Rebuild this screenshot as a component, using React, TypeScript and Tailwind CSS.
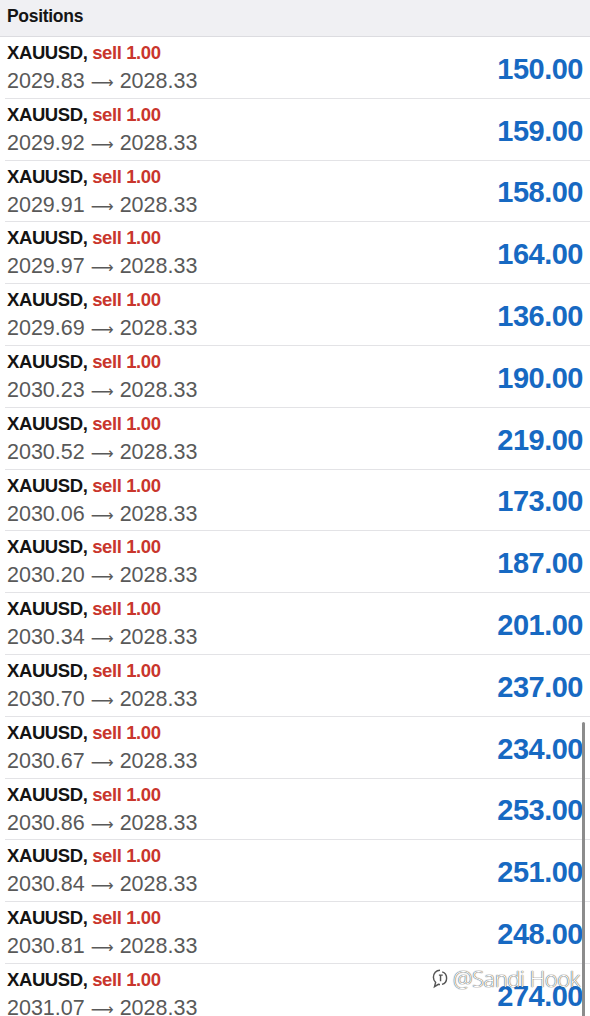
import React from 'react';

// open -> close pairs and profit for each sell position
const positions: { open: string; profit: string }[] = [
  { open: '2029.83', profit: '150.00' },
  { open: '2029.92', profit: '159.00' },
  { open: '2029.91', profit: '158.00' },
  { open: '2029.97', profit: '164.00' },
  { open: '2029.69', profit: '136.00' },
  { open: '2030.23', profit: '190.00' },
  { open: '2030.52', profit: '219.00' },
  { open: '2030.06', profit: '173.00' },
  { open: '2030.20', profit: '187.00' },
  { open: '2030.34', profit: '201.00' },
  { open: '2030.70', profit: '237.00' },
  { open: '2030.67', profit: '234.00' },
  { open: '2030.86', profit: '253.00' },
  { open: '2030.84', profit: '251.00' },
  { open: '2030.81', profit: '248.00' },
  { open: '2031.07', profit: '274.00' },
];

const font = "font-['Liberation_Sans',Arial,sans-serif]";

function PositionRow({ open, profit }: { open: string; profit: string }) {
  return (
    <div className="h-[61.8px] border-b border-[#e3e3e6] ml-[5px] pl-[2px] pr-[7px] flex justify-between">
      <div className="flex flex-col pt-[5px]">
        <div className="text-[18.5px] leading-[22px] font-bold text-[#141414] tracking-[-0.4px]">
          XAUUSD, <span className="text-[#c9362c]">sell 1.00</span>
        </div>
        <div className="mt-[4px] text-[21.5px] leading-[26px] text-[#595959] whitespace-nowrap">
          {open}{' '}
          <span className="font-['DejaVu_Sans',sans-serif] text-[16px]">⟶</span>
          {' '}2028.33
        </div>
      </div>
      <div className="self-center mt-[3px] text-[29px] leading-[28px] font-bold text-[#1769c2] tracking-[-0.5px]">
        {profit}
      </div>
    </div>
  );
}

export default function App() {
  return (
    <div className={`relative w-[590px] h-[1016px] overflow-hidden bg-white ${font}`}>
      {/* Header */}
      <div className="h-[37px] bg-[#f0f0f3] border-b border-[#dcdce0] px-[7px] flex items-center">
        <span className="text-[17.5px] font-bold text-[#151515] tracking-[-0.3px] -mt-[4px]">Positions</span>
      </div>

      {positions.map((p, i) => (
        <PositionRow key={i} open={p.open} profit={p.profit} />
      ))}

      {/* scrollbar */}
      <div className="absolute right-[5px] top-[722px] w-[3px] h-[300px] rounded-full bg-[#8c8c8c]" />

      {/* watermark */}
      <div className="absolute left-[430px] top-[962px] flex items-center gap-[3px] whitespace-nowrap text-white text-[22px] [text-shadow:0_0_1px_#444,0_0_1px_#444]">
        <svg width="20" height="22" viewBox="0 0 18 20" fill="none" stroke="#555" strokeWidth="1.3">
          <path d="M9 2c-3.5 0-6 2.7-6 6.5 0 2 .8 3.6 2 4.6L4 17l3.5-2.2c.5.1 1 .2 1.5.2" />
          <path d="M11 3.5c2.4.8 4 3 4 5.8 0 2.8-1.8 5-4.2 5.6" />
          <path d="M8 6.5h3.5M9.5 6.5v5.5" />
        </svg>
        <span className="font-['Open_Sans',sans-serif] font-light tracking-[-0.5px]">@Sandi Hook</span>
      </div>
    </div>
  );
}
